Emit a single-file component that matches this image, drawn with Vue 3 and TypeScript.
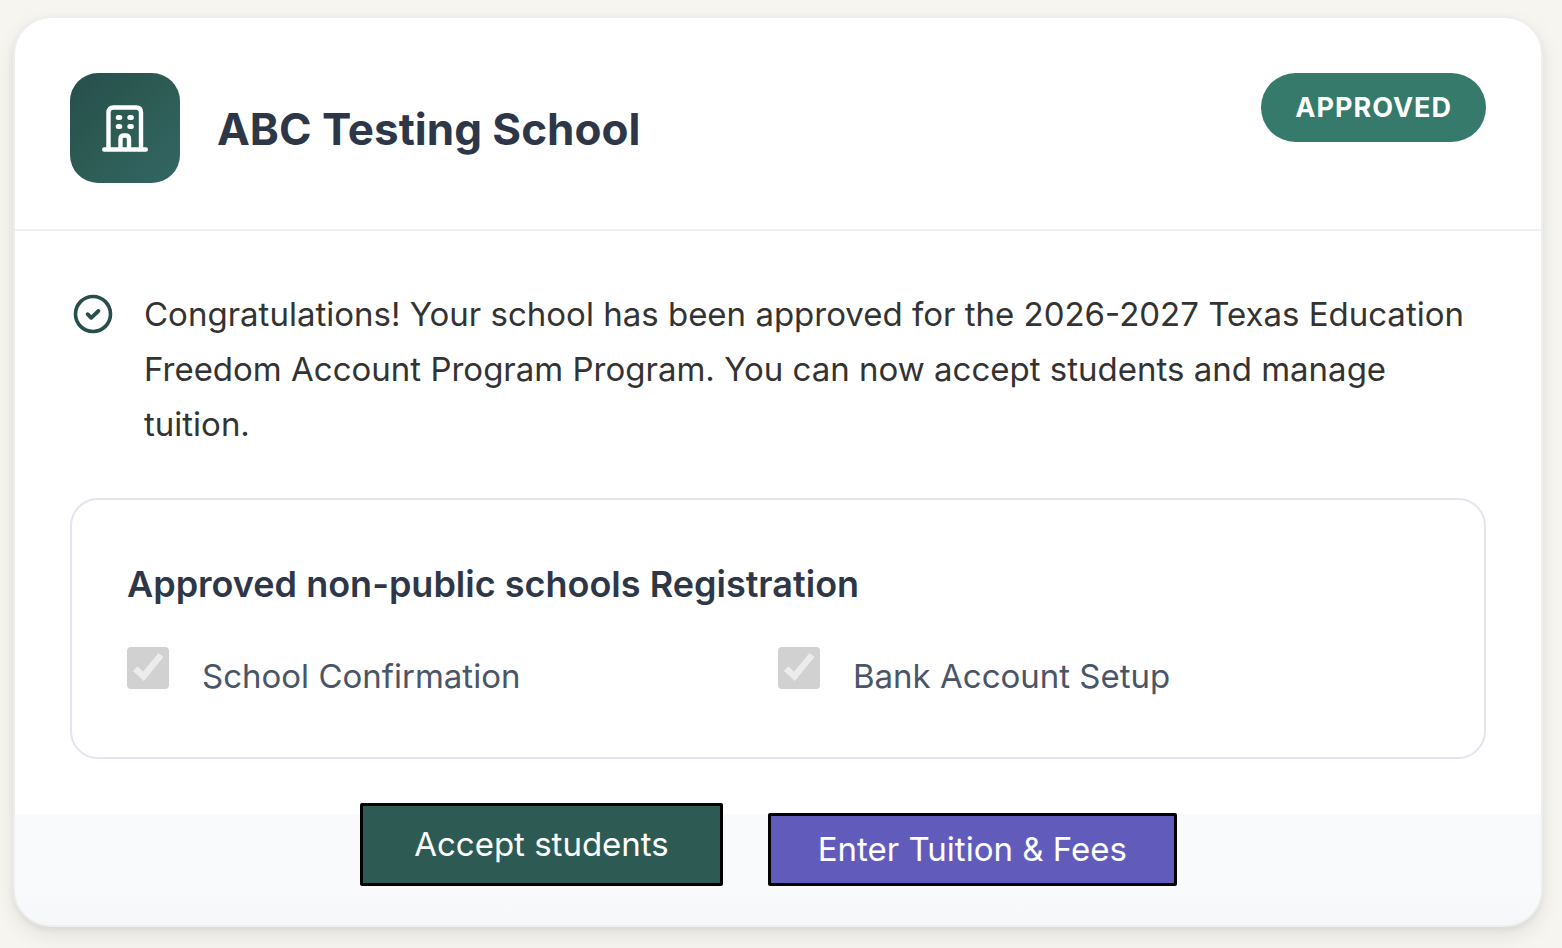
<script setup lang="ts">
interface Step {
  id: string
  label: string
  done: boolean
}

const school = 'ABC Testing School'
const status = 'Approved'
const message =
  'Congratulations! Your school has been approved for the 2026-2027 Texas Education Freedom Account Program Program. You can now accept students and manage tuition.'

const steps: Step[] = [
  { id: 'school-confirmation', label: 'School Confirmation', done: true },
  { id: 'bank-account', label: 'Bank Account Setup', done: true },
]
</script>

<template>
  <main class="page">
    <article class="card">
      <header class="head">
        <div class="tile">
          <svg class="building" viewBox="0 0 46 48" aria-hidden="true">
            <g fill="none" stroke="currentColor" stroke-linecap="round" stroke-linejoin="round">
              <path
                d="M2.200 45.500H43.800M6.500 45V8.500Q6.500 3.500 11.500 3.500H34Q39 3.500 39 8.500V45M18.500 45V35Q18.500 31.500 22 31.500H23.500Q27 31.500 27 35V45"
                stroke-width="4.400"
              />
              <path d="M16.200 13.500H17.800M27.800 13.500H29.400M16.200 22.500H17.800M27.800 22.500H29.400" stroke-width="5" />
            </g>
          </svg>
        </div>
        <h1 class="title">{{ school }}</h1>
        <span class="badge">{{ status }}</span>
      </header>

      <section class="body">
        <div class="notice">
          <svg class="check" viewBox="0 0 40 40" aria-hidden="true">
            <circle cx="20" cy="20" r="17.500" fill="none" stroke="currentColor" stroke-width="3.600" />
            <path
              d="M14.600 20.200L18.200 23.800L25.400 17"
              fill="none"
              stroke="currentColor"
              stroke-width="3.800"
              stroke-linecap="round"
              stroke-linejoin="round"
            />
          </svg>
          <p class="message">{{ message }}</p>
        </div>

        <section class="panel">
          <h2 class="subtitle">Approved non-public schools Registration</h2>
          <div class="steps">
            <div v-for="step in steps" :key="step.id" class="step">
              <input :id="step.id" class="box" type="checkbox" :checked="step.done" disabled />
              <label :for="step.id">{{ step.label }}</label>
            </div>
          </div>
        </section>
      </section>

      <footer class="foot">
        <div class="actions">
          <button type="button" class="btn accept">Accept students</button>
          <button type="button" class="btn tuition">Enter Tuition &amp; Fees</button>
        </div>
      </footer>
    </article>
  </main>
</template>

<style>
body {
  margin: 0;
  background: #f6f5f0;
}
</style>

<style scoped>
.page {
  box-sizing: border-box;
  min-height: 100vh;
  padding: 16px 19px 21px 13px;
  overflow: hidden;
  font-family: Inter, "Liberation Sans", sans-serif;
}

.card {
  border: 2px solid #eeeeef;
  border-radius: 38px;
  background: #fff;
  background-clip: padding-box;
  box-shadow: 0 9px 22px rgba(0, 0, 0, 0.08), 0 3px 6px rgba(0, 0, 0, 0.06);
}

.head {
  display: flex;
  align-items: flex-start;
  padding: 55px 55px 44px;
  border-bottom: 2px solid #eff0f2;
}

.tile {
  display: flex;
  flex: none;
  align-items: center;
  justify-content: center;
  width: 110px;
  height: 110px;
  border-radius: 28px;
  color: #fff;
  background: linear-gradient(135deg, #274e4b, #2d5c54 50%, #336664);
}

.building {
  width: 46px;
  height: 48px;
}

.title {
  flex: 1;
  margin: 0 0 0 37px;
  font-size: 44px;
  font-weight: 700;
  line-height: 112px;
  color: #2d3748;
}

.badge {
  padding: 0 34px;
  border-radius: 35px;
  font-size: 27px;
  font-weight: 700;
  line-height: 69px;
  letter-spacing: 1px;
  text-transform: uppercase;
  color: #fff;
  background: #357a6a;
}

.body {
  padding: 56px 55px 55px;
}

.notice {
  display: flex;
  align-items: flex-start;
  gap: 31px;
}

.check {
  flex: none;
  width: 40px;
  height: 40px;
  margin: 7px 0 0 3px;
  color: #274e4b;
}

.message {
  margin: 0;
  font-size: 33px;
  line-height: 55px;
  color: #333;
}

.panel {
  margin-top: 46px;
  padding: 56px 55px 52px;
  border: 2px solid #e2e5ee;
  border-radius: 28px;
}

.subtitle {
  margin: 0 0 35px;
  font-size: 36px;
  font-weight: 600;
  line-height: 56px;
  color: #2d3748;
}

.steps {
  display: grid;
  grid-template-columns: 1fr 1fr;
}

.step {
  display: flex;
  align-items: flex-start;
  gap: 33px;
  font-size: 33px;
  line-height: 58px;
  color: #4a5568;
}

.box {
  appearance: none;
  flex: none;
  width: 42px;
  height: 42px;
  margin: 0;
  border-radius: 4px;
  background: #d1d1d1;
}

.box:checked::before {
  content: "";
  display: block;
  width: 42px;
  height: 42px;
  background: #ececec;
  clip-path: polygon(14% 57%, 25% 46%, 38% 59%, 75% 14%, 87% 24%, 40% 81%);
}

.foot {
  display: flow-root;
  padding: 0 74px 39px 55px;
  border-radius: 0 0 36px 36px;
  background: linear-gradient(#f9fafc 65%, #f6f7f9);
}

.actions {
  display: flex;
  align-items: flex-end;
  justify-content: center;
  gap: 45px;
  margin-top: -11px;
}

.btn {
  padding: 0 47px;
  border: 3px solid #000;
  border-radius: 2px;
  font-family: inherit;
  font-size: 33px;
  font-weight: 400;
  color: #fff;
}

.accept {
  padding: 0 51px;
  line-height: 77px;
  background: #2d5b53;
}

.tuition {
  line-height: 67px;
  background: #615cbc;
}
</style>
